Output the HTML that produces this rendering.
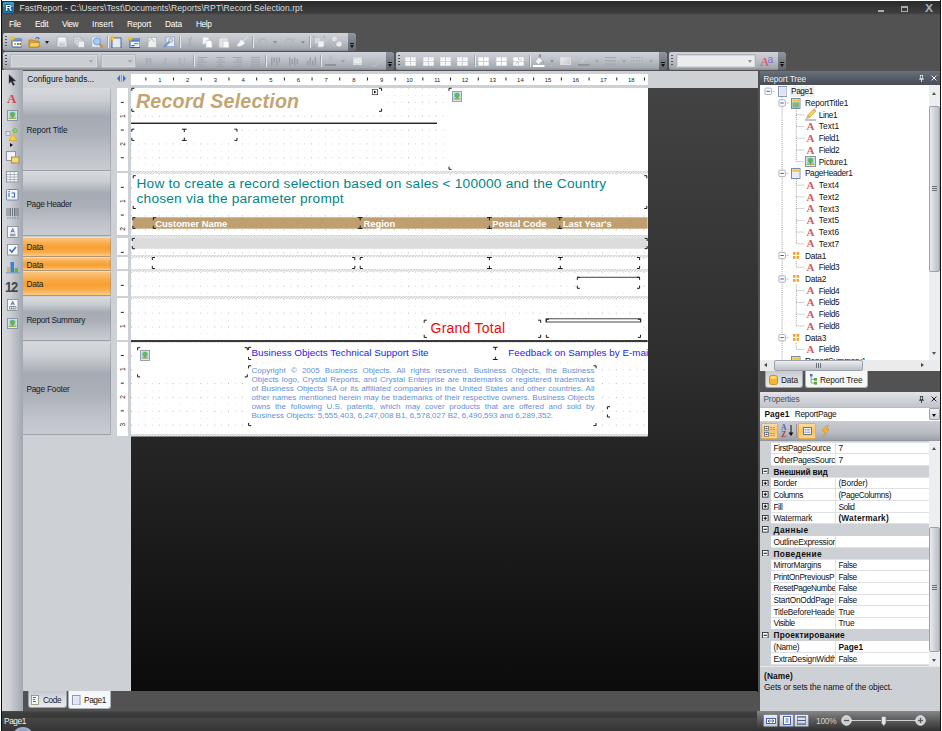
<!DOCTYPE html>
<html lang="en"><head><meta charset="utf-8"><title>FastReport - Record Selection.rpt</title>
<style>
*{box-sizing:border-box;margin:0;padding:0}
html,body{width:942px;height:731px;overflow:hidden;background:#525252}
body{position:relative;font-family:"Liberation Sans","DejaVu Sans",sans-serif;font-size:8.4px;color:#111;line-height:1}
.a{position:absolute}
.t{position:absolute;white-space:nowrap;line-height:10px;height:10px}
.tb{position:absolute;border-radius:2px 4px 4px 2px;background:linear-gradient(#cfd2d7 0%,#bfc3c9 40%,#a3a8b0 88%,#858a92 100%);}
.grip{position:absolute;left:2px;top:3px;width:2px;height:12px;background:repeating-linear-gradient(#50555c 0 1.4px,transparent 1.4px 2.9px)}
.ovf{position:absolute;right:0;top:0;width:8px;height:100%;border-radius:0 4px 4px 0;background:linear-gradient(#9096a0,#5f656e)}
.ovf:after{content:"";position:absolute;left:2px;bottom:3px;border:2px solid transparent;border-top:3px solid #111;border-bottom:0}
.ovf:before{content:"";position:absolute;left:2px;bottom:7px;width:4px;height:1px;background:#111}
.sep{position:absolute;top:3px;width:1px;height:12px;background:#9ea3ab;box-shadow:1px 0 0 #e6e8eb}
.cb{position:absolute;top:2px;height:14px;background:#cbced3;border:1px solid #b3b7bd;border-radius:1px;box-shadow:inset 0 0 0 1px #d6d8dc}
.dd{position:absolute;border:2.5px solid transparent;border-top:3px solid #8a8f97;border-bottom:0}
</style></head>
<body>
<div class="a" style="left:0;top:0;width:942px;height:15px;background:linear-gradient(#262626 0,#2c2c2c 12%,#3d3d3d 85%,#525252 100%)"></div>
<div class="a" style="left:0;top:15px;width:942px;height:18px;background:#525252"></div>
<svg class="a" style="left:3.2px;top:2.2px" width="11" height="11" viewBox="0 0 11 11"><rect width="11" height="11" rx="1.5" fill="#1b78b4"/><rect x="0" y="0" width="11" height="5" rx="1.5" fill="#3a9ad2"/><text x="2.3" y="9.3" font-family="Liberation Sans,sans-serif" font-weight="bold" font-size="9.5" fill="#fff" stroke="#0c1a24" stroke-width="1.1" paint-order="stroke">R</text></svg>
<div class="t" style="left:19.5px;top:3px;font-size:8.6px;color:#dcdcdc;letter-spacing:0.043px;">FastReport - C:\Users\Test\Documents\Reports\RPT\Record Selection.rpt</div>
<div class="a" style="left:878px;top:10px;width:6px;height:2px;background:#a6adba"></div>
<div class="a" style="left:901px;top:6px;width:7px;height:6px;border:1px solid #a6adba;border-top-width:2px"></div>
<div class="t" style="left:924.6px;top:3.5px;color:#a9b0bc;font-size:10px;font-weight:bold;transform:scaleX(1.2);transform-origin:0 0">X</div>
<div class="t" style="left:9px;top:19px;font-size:8.3px;color:#fff;letter-spacing:-0.411px;">File</div>
<div class="t" style="left:35px;top:19px;font-size:8.3px;color:#fff;letter-spacing:-0.277px;">Edit</div>
<div class="t" style="left:62px;top:19px;font-size:8.3px;color:#fff;letter-spacing:-0.428px;">View</div>
<div class="t" style="left:92px;top:19px;font-size:8.3px;color:#fff;letter-spacing:0.083px;">Insert</div>
<div class="t" style="left:127px;top:19px;font-size:8.3px;color:#fff;letter-spacing:-0.12px;">Report</div>
<div class="t" style="left:165px;top:19px;font-size:8.3px;color:#fff;letter-spacing:-0.168px;">Data</div>
<div class="t" style="left:196px;top:19px;font-size:8.3px;color:#fff;letter-spacing:-0.419px;">Help</div>
<div class="tb" style="left:3px;top:33px;width:353px;height:18px"><div class="grip"></div><div class="ovf"></div></div>
<svg class="a" style="left:10px;top:36px" width="12" height="12" viewBox="0 0 12 12"><rect x="2" y="3" width="10" height="8" rx="1" fill="#fff" stroke="#3b5f9e" stroke-width="1"/><rect x="2.5" y="3.5" width="9" height="2" fill="#5b86c8"/><rect x="4" y="7" width="2" height="2" fill="#e9a33a"/><rect x="7" y="7" width="2" height="2" fill="#5aa24a"/><rect x="9.5" y="7" width="1.5" height="2" fill="#c44"/><path d="M2.5 0 L3.3 1.7 5 2.5 3.3 3.3 2.5 5 1.7 3.3 0 2.5 1.7 1.7z" fill="#f5d23c" stroke="#d9a514" stroke-width=".4"/></svg>
<svg class="a" style="left:28px;top:36px" width="12" height="12" viewBox="0 0 12 12"><path d="M1 4 h4 l1 1 h5 v6 h-10z" fill="#e9a52c" stroke="#b57a12" stroke-width=".8"/><path d="M1 11 l1.5-4.5 h9.5 l-1.5 4.5z" fill="#f8cf62" stroke="#b57a12" stroke-width=".6"/><path d="M7 3 q2-3 4-.5" fill="none" stroke="#3d6fb8" stroke-width="1"/><path d="M10 1 l2 1.8 -2.4.6z" fill="#3d6fb8"/></svg>
<svg class="a" style="left:56px;top:36px" width="12" height="12" viewBox="0 0 12 12"><rect x="1" y="1" width="10" height="10" rx="1" fill="#e3e5e8" stroke="#a5aab1" stroke-width=".8"/><rect x="3" y="1.5" width="6" height="3.5" fill="#f4f5f6"/><rect x="3" y="7" width="6" height="4" fill="#c9ccd1"/></svg>
<svg class="a" style="left:73px;top:36px" width="12" height="12" viewBox="0 0 12 12"><rect x="1" y="1" width="7" height="7" fill="#e3e5e8" stroke="#a5aab1" stroke-width=".7"/><rect x="3" y="3" width="7" height="7" fill="#e3e5e8" stroke="#a5aab1" stroke-width=".7"/><rect x="5" y="5" width="6.5" height="6.5" fill="#eceef0" stroke="#a5aab1" stroke-width=".7"/></svg>
<svg class="a" style="left:91px;top:36px" width="12" height="12" viewBox="0 0 12 12"><rect x="1" y="1" width="8" height="10" fill="#f4f6f9" stroke="#aab3c2" stroke-width=".7"/><circle cx="6" cy="5.5" r="3.6" fill="#a9cbee" stroke="#6f9fd6" stroke-width="1"/><path d="M8.7 8.3 L11.6 11.2" stroke="#c98a3a" stroke-width="1.8" stroke-linecap="round"/></svg>
<svg class="a" style="left:110px;top:36px" width="12" height="12" viewBox="0 0 12 12"><rect x="2" y="2" width="9" height="10" fill="#f5f7fb" stroke="#41639f" stroke-width="1"/><rect x="3" y="3" width="7" height="8" fill="#e4e9f3"/><path d="M2.5 0 L3.3 1.7 5 2.5 3.3 3.3 2.5 5 1.7 3.3 0 2.5 1.7 1.7z" fill="#f5d23c" stroke="#d9a514" stroke-width=".4"/></svg>
<svg class="a" style="left:128px;top:36px" width="12" height="12" viewBox="0 0 12 12"><rect x="2" y="3" width="10" height="8.5" fill="#f0f3f8" stroke="#3b5f9e" stroke-width="1"/><rect x="2.5" y="3.5" width="9" height="2.2" fill="#4f82cf"/><rect x="6" y="7" width="4.5" height="1.3" fill="#8d97a8"/><rect x="3.5" y="9" width="3" height="1.3" fill="#3b5f9e"/><path d="M2.5 0 L3.3 1.7 5 2.5 3.3 3.3 2.5 5 1.7 3.3 0 2.5 1.7 1.7z" fill="#f5d23c" stroke="#d9a514" stroke-width=".4"/></svg>
<svg class="a" style="left:146px;top:36px" width="12" height="12" viewBox="0 0 12 12"><rect x="2" y="1.5" width="8.5" height="10" fill="#eceef0" stroke="#a5aab1" stroke-width=".7"/><path d="M2 6 L6 2 M5 2 L8.5 6" stroke="#b9bdc3" stroke-width="1"/></svg>
<svg class="a" style="left:163px;top:36px" width="12" height="12" viewBox="0 0 12 12"><rect x="3" y="1" width="8.5" height="9.5" fill="#e9edf5" stroke="#8d9fc4" stroke-width=".8"/><path d="M1.5 10.5 L6.5 5.5" stroke="#6e97d8" stroke-width="2.2" stroke-linecap="round"/><circle cx="7.7" cy="4.2" r="2" fill="#d6d9de" stroke="#9a9fa7" stroke-width=".8"/></svg>
<svg class="a" style="left:184px;top:36px" width="12" height="12" viewBox="0 0 12 12"><path d="M7.5 1 L5 8 M4.5 2 L7 8" stroke="#a9adb4" stroke-width="1"/><circle cx="4.2" cy="9.6" r="1.5" fill="none" stroke="#a9adb4" stroke-width="1"/><circle cx="7.6" cy="9.6" r="1.5" fill="none" stroke="#a9adb4" stroke-width="1"/></svg>
<svg class="a" style="left:201px;top:36px" width="12" height="12" viewBox="0 0 12 12"><path d="M1.5 1 h5 l1.5 1.5 v5.5 h-6.5z" fill="#f6f7f8" stroke="#c3c6cb" stroke-width=".7"/><path d="M5 4.5 h4.5 l1.5 1.5 v5.5 h-6z" fill="#fbfbfc" stroke="#c3c6cb" stroke-width=".7"/></svg>
<svg class="a" style="left:218px;top:36px" width="12" height="12" viewBox="0 0 12 12"><rect x="1" y="2" width="9" height="9.5" rx="1" fill="#e3e5e8" stroke="#bfc3c8" stroke-width=".7"/><rect x="3.5" y="1" width="4" height="2" fill="#cfd2d6"/><path d="M5 5 h4.5 l1.5 1.5 v5 h-6z" fill="#fbfbfc" stroke="#c3c6cb" stroke-width=".7"/></svg>
<svg class="a" style="left:236px;top:36px" width="12" height="12" viewBox="0 0 12 12"><path d="M11.3 .8 L7.5 5" stroke="#d4d7db" stroke-width="1.8" stroke-linecap="round"/><path d="M5.5 3.5 L9 7 7.5 8.5 5 10 2 10.5 .8 9 3 7 4 5z" fill="#f4f5f7" stroke="#cdd0d5" stroke-width=".5"/></svg>
<svg class="a" style="left:256px;top:36px" width="12" height="12" viewBox="0 0 12 12"><path d="M3 5 q3.5-4 6.5-.8 q1.8 3 -2 6" fill="none" stroke="#b3b7bd" stroke-width="1.4"/><path d="M1.5 2.5 L2.2 6.8 6 5.5z" fill="#b3b7bd"/></svg>
<svg class="a" style="left:284px;top:36px" width="12" height="12" viewBox="0 0 12 12"><path d="M9 5 q-3.5-4 -6.5-.8 q-1.8 3 2 6" fill="none" stroke="#b3b7bd" stroke-width="1.4"/><path d="M10.5 2.5 L9.8 6.8 6 5.5z" fill="#b3b7bd"/></svg>
<svg class="a" style="left:313px;top:36px" width="12" height="12" viewBox="0 0 12 12"><rect x="1.5" y="1.5" width="6" height="6" fill="#d6d9dd" stroke="#b9bdc3" stroke-width=".6"/><rect x="5" y="5" width="6" height="6" fill="#eef0f2" stroke="#c3c6cb" stroke-width=".6"/><rect x="0" y="0" width="1.5" height="1.5" fill="#9da2aa"/><rect x="10.5" y="0" width="1.5" height="1.5" fill="#9da2aa"/><rect x="0" y="10.5" width="1.5" height="1.5" fill="#9da2aa"/><rect x="10.5" y="10.5" width="1.5" height="1.5" fill="#9da2aa"/></svg>
<svg class="a" style="left:331px;top:36px" width="12" height="12" viewBox="0 0 12 12"><circle cx="3.5" cy="3" r="2.3" fill="#e6e8eb"/><circle cx="8" cy="8" r="2.6" fill="#eef0f2"/><path d="M3.5 3 L8 8 M1 8 L4 11 M8 1 L11 4" stroke="#c2c5ca" stroke-width=".8"/></svg>
<div class="dd" style="left:45px;top:41px;border-top-color:#222"></div>
<div class="dd" style="left:273px;top:41px;border-top-color:#8a8f97"></div>
<div class="dd" style="left:300.5px;top:41px;border-top-color:#8a8f97"></div>
<div class="sep" style="left:107px;top:36px"></div>
<div class="sep" style="left:179px;top:36px"></div>
<div class="sep" style="left:252px;top:36px"></div>
<div class="sep" style="left:309px;top:36px"></div>
<div class="tb" style="left:3px;top:52px;width:391px;height:18px"><div class="grip"></div><div class="ovf"></div></div>
<div class="tb" style="left:396px;top:52px;width:271px;height:18px"><div class="grip"></div><div class="ovf"></div></div>
<div class="tb" style="left:669px;top:52px;width:117px;height:18px"><div class="grip"></div><div class="ovf"></div></div>
<div class="cb" style="left:9.5px;top:54px;width:88px"></div><div class="dd" style="left:88.5px;top:60px;border-top-color:#a0a5ac"></div>
<div class="cb" style="left:100.5px;top:54px;width:35px"></div><div class="dd" style="left:127.5px;top:60px;border-top-color:#a0a5ac"></div>
<div class="cb" style="left:675.5px;top:54px;width:80.5px;background:#ececee;border-color:#aeb2b9"></div><div class="dd" style="left:747.5px;top:60px;border-top-color:#8f949b"></div>
<div class="t" style="left:145px;top:55px;font-family:'Liberation Serif',serif;font-weight:bold;font-size:11px;line-height:12px;height:12px;color:#a6aab1">B</div>
<div class="t" style="left:163px;top:55px;font-family:'Liberation Serif',serif;font-style:italic;font-size:11px;line-height:12px;height:12px;color:#a6aab1">I</div>
<div class="t" style="left:178px;top:55px;font-family:'Liberation Serif',serif;font-size:11px;line-height:12px;height:12px;color:#a6aab1;text-decoration:underline">U</div>
<svg class="a" style="left:197px;top:55.5px" width="11" height="12" viewBox="0 0 11 12"><rect x="1" y="1.2" width="9" height=".8" fill="#9a9fa7"/><rect x="1" y="3.4" width="6" height=".8" fill="#9a9fa7"/><rect x="1" y="5.6" width="9" height=".8" fill="#9a9fa7"/><rect x="1" y="7.8" width="6" height=".8" fill="#9a9fa7"/><rect x="1" y="10" width="9" height=".8" fill="#9a9fa7"/></svg>
<svg class="a" style="left:214.5px;top:55.5px" width="11" height="12" viewBox="0 0 11 12"><rect x="1" y="1.2" width="9" height=".8" fill="#9a9fa7"/><rect x="3" y="3.4" width="5" height=".8" fill="#9a9fa7"/><rect x="1" y="5.6" width="9" height=".8" fill="#9a9fa7"/><rect x="3" y="7.8" width="5" height=".8" fill="#9a9fa7"/><rect x="1" y="10" width="9" height=".8" fill="#9a9fa7"/></svg>
<svg class="a" style="left:232px;top:55.5px" width="11" height="12" viewBox="0 0 11 12"><rect x="1" y="1.2" width="9" height=".8" fill="#9a9fa7"/><rect x="4" y="3.4" width="6" height=".8" fill="#9a9fa7"/><rect x="1" y="5.6" width="9" height=".8" fill="#9a9fa7"/><rect x="4" y="7.8" width="6" height=".8" fill="#9a9fa7"/><rect x="1" y="10" width="9" height=".8" fill="#9a9fa7"/></svg>
<svg class="a" style="left:250px;top:55.5px" width="11" height="12" viewBox="0 0 11 12"><rect x="1" y="1.2" width="9" height=".8" fill="#9a9fa7"/><rect x="1" y="3.4" width="9" height=".8" fill="#9a9fa7"/><rect x="1" y="5.6" width="9" height=".8" fill="#9a9fa7"/><rect x="1" y="7.8" width="9" height=".8" fill="#9a9fa7"/><rect x="1" y="10" width="9" height=".8" fill="#9a9fa7"/></svg>
<svg class="a" style="left:270px;top:55.5px" width="11" height="12" viewBox="0 0 11 12"><rect x="1.2" y="1.5" width="1.2" height="8" fill="#9298a0"/><rect x="3.7" y="1.5" width="1.2" height="5" fill="#9298a0"/><rect x="6.2" y="1.5" width="1.2" height="8" fill="#9298a0"/><rect x="8.7" y="1.5" width="1.2" height="5" fill="#9298a0"/></svg>
<svg class="a" style="left:288px;top:55.5px" width="11" height="12" viewBox="0 0 11 12"><rect x="1.2" y="1.5" width="1.2" height="8" fill="#9298a0"/><rect x="3.7" y="3" width="1.2" height="5" fill="#9298a0"/><rect x="6.2" y="1.5" width="1.2" height="8" fill="#9298a0"/><rect x="8.7" y="3" width="1.2" height="5" fill="#9298a0"/></svg>
<svg class="a" style="left:305.5px;top:55.5px" width="11" height="12" viewBox="0 0 11 12"><rect x="1.2" y="4.5" width="1.2" height="5" fill="#9298a0"/><rect x="3.7" y="1.5" width="1.2" height="8" fill="#9298a0"/><rect x="6.2" y="4.5" width="1.2" height="5" fill="#9298a0"/><rect x="8.7" y="1.5" width="1.2" height="8" fill="#9298a0"/></svg>
<div class="sep" style="left:193px;top:55px"></div>
<div class="sep" style="left:265px;top:55px"></div>
<div class="sep" style="left:320px;top:55px"></div>
<div class="sep" style="left:474px;top:55px"></div>
<div class="sep" style="left:529px;top:55px"></div>
<div class="t" style="left:327px;top:54px;font-family:'Liberation Serif',serif;font-style:italic;font-size:10px;line-height:10px;color:#b6bac0">A</div>
<div class="a" style="left:325px;top:64px;width:11px;height:2px;background:#8e939a"></div>
<div class="dd" style="left:341px;top:60px;border-top-color:#9ea3aa"></div>
<div class="a" style="left:353px;top:57px;width:9px;height:8px;background:#d7dade"></div><div class="t" style="left:354px;top:56px;font-size:6.5px;font-weight:bold;color:#f4f5f6">ab</div>
<svg class="a" style="left:369px;top:55.5px" width="11" height="12" viewBox="0 0 11 12"><path d="M2.6 4 A3.6 3.6 0 1 1 3.2 9" fill="none" stroke="#bcc0c6" stroke-width="1.3"/><path d="M.8 2.2 L4.6 2.6 2.4 5.6z" fill="#bcc0c6"/></svg>
<svg class="a" style="left:405px;top:57.2px" width="11" height="9" viewBox="0 0 11 9"><rect x="0.3" y="0.3" width="10.4" height="8.4" fill="#fcfcfd"/><path d="M5.5 0 V9 M0 4.5 H11" stroke="#c6cad0" stroke-width=".9"/><path d="M2.8 0 V9 M8.2 0 V9 M0 2.3 H11 M0 6.7 H11" stroke="#dadde1" stroke-width=".6" stroke-dasharray="1 1"/></svg>
<svg class="a" style="left:422.5px;top:57.2px" width="11" height="9" viewBox="0 0 11 9"><rect x="0.3" y="0.3" width="10.4" height="8.4" fill="#fcfcfd"/><path d="M5.5 0 V9 M0 4.5 H11" stroke="#c6cad0" stroke-width=".9"/><path d="M2.8 0 V9 M8.2 0 V9 M0 2.3 H11 M0 6.7 H11" stroke="#dadde1" stroke-width=".6" stroke-dasharray="1 1"/></svg>
<svg class="a" style="left:440px;top:57.2px" width="11" height="9" viewBox="0 0 11 9"><rect x="0.3" y="0.3" width="10.4" height="8.4" fill="#fcfcfd"/><path d="M5.5 0 V9 M0 4.5 H11" stroke="#c6cad0" stroke-width=".9"/><path d="M2.8 0 V9 M8.2 0 V9 M0 2.3 H11 M0 6.7 H11" stroke="#dadde1" stroke-width=".6" stroke-dasharray="1 1"/></svg>
<svg class="a" style="left:457px;top:57.2px" width="11" height="9" viewBox="0 0 11 9"><rect x="0.3" y="0.3" width="10.4" height="8.4" fill="#fcfcfd"/><path d="M5.5 0 V9 M0 4.5 H11" stroke="#c6cad0" stroke-width=".9"/><path d="M2.8 0 V9 M8.2 0 V9 M0 2.3 H11 M0 6.7 H11" stroke="#dadde1" stroke-width=".6" stroke-dasharray="1 1"/></svg>
<svg class="a" style="left:478px;top:57.2px" width="11" height="9" viewBox="0 0 11 9"><rect x="0.3" y="0.3" width="10.4" height="8.4" fill="#fcfcfd"/><path d="M5.5 0 V9 M0 4.5 H11" stroke="#c6cad0" stroke-width=".9"/></svg>
<svg class="a" style="left:495.5px;top:57.2px" width="11" height="9" viewBox="0 0 11 9"><rect x="0.3" y="0.3" width="10.4" height="8.4" fill="#fcfcfd"/><path d="M5.5 0 V9 M0 4.5 H11" stroke="#c6cad0" stroke-width=".9"/></svg>
<svg class="a" style="left:512.5px;top:57.2px" width="11" height="9" viewBox="0 0 11 9"><rect x="0.3" y="0.3" width="10.4" height="8.4" fill="#fcfcfd"/><path d="M5.5 0 V9 M0 4.5 H11" stroke="#c6cad0" stroke-width=".9"/><path d="M2 7.5 L9 1.5" stroke="#c0c4ca" stroke-width="1"/><circle cx="6.5" cy="3.5" r="1.8" fill="#dfe2e6"/></svg>
<svg class="a" style="left:533px;top:54px" width="12" height="13" viewBox="0 0 12 13"><path d="M2 7.5 L6 3 10 6.5 5.5 10.5z" fill="#f1f2f4" stroke="#9a9fa7" stroke-width=".6"/><path d="M6 3 q0-2.5 1.5-2.5 v3" fill="none" stroke="#70757d" stroke-width=".8"/><path d="M10 6.5 q1.2 1.5 .6 3 q-1-.5 -.6-3" fill="#8d9299"/><rect x="0" y="11" width="11.5" height="2" fill="#fff"/></svg>
<div class="dd" style="left:549.5px;top:60px;border-top-color:#8f949b"></div>
<div class="a" style="left:560px;top:57px;width:11px;height:8px;background:linear-gradient(135deg,#eceef0,#c5c8cd);border:1px solid #d9dbdf"></div>
<svg class="a" style="left:578px;top:55px" width="12" height="12" viewBox="0 0 12 12"><path d="M3 7.5 L8.5 1.5" stroke="#c9ccd1" stroke-width="1.6"/><rect x="0" y="9" width="11.5" height="1.8" fill="#8e939a"/></svg>
<div class="dd" style="left:594.5px;top:60px;border-top-color:#9ea3aa"></div>
<svg class="a" style="left:605px;top:56px" width="12" height="10" viewBox="0 0 12 10"><rect x="0" y="1" width="11" height="1" fill="#a5aab1"/><rect x="0" y="4" width="11" height="1.3" fill="#a5aab1"/><rect x="0" y="7.5" width="11" height="1.8" fill="#a5aab1"/></svg>
<div class="dd" style="left:621.5px;top:60px;border-top-color:#9ea3aa"></div>
<svg class="a" style="left:631px;top:56px" width="12" height="10" viewBox="0 0 12 10"><path d="M0 1.5 H12 M0 4.7 H12 M0 8 H12" stroke="#a5aab1" stroke-width="1" stroke-dasharray="1.5 1"/></svg>
<div class="dd" style="left:648.5px;top:60px;border-top-color:#9ea3aa"></div>
<div class="t" style="left:760.3px;top:55.5px;font-family:'Liberation Serif',serif;font-weight:bold;font-size:12.3px;line-height:12px;height:12px;color:#df6468">A</div>
<div class="t" style="left:767.5px;top:55.5px;font-size:10.2px;line-height:8px;height:8px;color:#7272dc">a</div>
<div class="a" style="left:2px;top:70px;width:21px;height:641px;background:linear-gradient(90deg,#d6d8dc 0%,#cdd0d5 35%,#b3b8bf 75%,#a2a7b0 100%)"></div>
<svg class="a" style="left:8px;top:74px" width="9" height="12" viewBox="0 0 9 12"><path d="M1 0.5 L1 9.5 3.2 7.5 5 11.5 6.6 10.8 4.8 7 7.8 7z" fill="#222" stroke="#555" stroke-width=".4"/></svg>
<div class="t" style="left:7px;top:92px;font-family:'Liberation Serif',serif;font-weight:bold;font-size:13px;line-height:13px;height:13px;color:#d9434c">A</div>
<svg class="a" style="left:6.5px;top:110px" width="11" height="11" viewBox="0 0 11 11"><rect x=".5" y=".5" width="10" height="10" fill="#e4e8ed" stroke="#8e949e" stroke-width="1"/><rect x="1.6" y="1.6" width="7.8" height="6.4" fill="#a9d6f2"/><circle cx="5.5" cy="4.3" r="2.6" fill="#64b85c"/><rect x="4.9" y="6.3" width="1.2" height="1.7" fill="#8a6a3a"/><rect x="1.6" y="7.6" width="7.8" height="1.4" fill="#7cc06a"/><rect x="4" y="7.9" width="3" height="1" fill="#e6923a"/></svg>
<svg class="a" style="left:5px;top:128px" width="14" height="14" viewBox="0 0 14 14"><rect x="1" y="3.5" width="4" height="4" fill="#e4e6e9" stroke="#8b9099" stroke-width=".7"/><circle cx="10" cy="2.8" r="2.2" fill="#8fd06a" stroke="#58a838" stroke-width=".6"/><path d="M8 6 L12 12.5 4 12.5z" fill="#f7d04a" stroke="#d7a420" stroke-width=".7"/></svg>
<div class="a" style="left:10px;top:143px;border:2px solid transparent;border-left:3px solid #111;border-right:0"></div>
<svg class="a" style="left:5.5px;top:151px" width="14" height="13" viewBox="0 0 14 13"><rect x=".5" y=".5" width="9" height="9" fill="#f1f3f6" stroke="#8b9099" stroke-width=".9"/><rect x="5.5" y="6" width="7.5" height="6" fill="#f5d873" stroke="#9a8a50" stroke-width=".9"/></svg>
<svg class="a" style="left:6px;top:171px" width="13" height="12" viewBox="0 0 13 12"><rect x=".5" y=".5" width="11.5" height="10.5" fill="#f5f6f8" stroke="#8b9099" stroke-width=".9"/><path d="M.5 3.5 H12 M.5 6 H12 M.5 8.5 H12 M4.3 .5 V11 M8.2 .5 V11" stroke="#9aa0a9" stroke-width=".7"/></svg>
<svg class="a" style="left:6px;top:189px" width="13" height="12" viewBox="0 0 13 12"><rect x=".5" y=".5" width="11.5" height="10.5" rx="1" fill="#f5f7fb" stroke="#5c7bb5" stroke-width=".9"/><path d="M3 4 v4 M5.5 4 h3 v4 h-3" fill="none" stroke="#3f68b5" stroke-width="1.1"/><rect x="2.5" y="2" width="1.3" height="1.3" fill="#3f68b5"/></svg>
<svg class="a" style="left:5.5px;top:208.3px" width="14" height="12" viewBox="0 0 14 12"><path d="M1 0 V8 M3 0 V8 M4.5 0 V8 M6.5 0 V8 M8.5 0 V8 M10 0 V8 M12 0 V8" stroke="#6a6f77" stroke-width=".9"/><path d="M1 10 H12.5" stroke="#7a7f87" stroke-width="1" stroke-dasharray="1.5 1"/></svg>
<svg class="a" style="left:6.5px;top:225.7px" width="12" height="12" viewBox="0 0 12 12"><rect x=".5" y=".5" width="10.5" height="11" fill="#f6f7f9" stroke="#8b9099" stroke-width=".9"/><path d="M4 6.5 L5.7 2.5 7.4 6.5 M4.6 5.3 H6.8" fill="none" stroke="#3f68b5" stroke-width=".9"/><path d="M3 8.3 H8.5 M3 9.8 H8.5" stroke="#555" stroke-width=".7"/></svg>
<svg class="a" style="left:6.5px;top:243.6px" width="12" height="12" viewBox="0 0 12 12"><rect x=".5" y=".5" width="10.5" height="10.5" fill="#f6f7f9" stroke="#8b9099" stroke-width=".9"/><path d="M2.5 5.5 L4.8 8 9 3" fill="none" stroke="#3f68b5" stroke-width="1.5"/></svg>
<svg class="a" style="left:5.5px;top:260.6px" width="14" height="13" viewBox="0 0 14 13"><rect x="1" y="6" width="3" height="5.5" fill="#e8b53a"/><rect x="4.5" y="1" width="3.5" height="10.5" fill="#3f7fd6"/><rect x="8.5" y="7" width="3.5" height="4.5" fill="#6ab04c"/><rect x="0" y="11.3" width="13.5" height="1" fill="#6f98c8"/></svg>
<div class="t" style="left:5px;top:280.2px;font-size:14px;line-height:14px;height:14px;letter-spacing:-1.2px;color:#44484e;font-weight:bold;transform:scaleX(.92);transform-origin:0 0">12</div>
<svg class="a" style="left:6.5px;top:298.8px" width="12" height="12" viewBox="0 0 12 12"><rect x=".5" y=".5" width="10.5" height="11" fill="#f6f7f9" stroke="#8b9099" stroke-width=".9"/><path d="M4 6 L5.7 2.3 7.4 6 M4.6 4.8 H6.8" fill="none" stroke="#3f68b5" stroke-width=".9"/><path d="M2.5 7.5 H9 V10 H2.5z M4.7 7.5 V10 M6.8 7.5 V10" fill="none" stroke="#555" stroke-width=".6"/></svg>
<svg class="a" style="left:6.5px;top:317.5px" width="11" height="11" viewBox="0 0 11 11"><rect x=".5" y=".5" width="10" height="10" fill="#e4e8ed" stroke="#8e949e" stroke-width="1"/><rect x="1.6" y="1.6" width="7.8" height="6.4" fill="#a9d6f2"/><circle cx="5.5" cy="4.3" r="2.6" fill="#64b85c"/><rect x="4.9" y="6.3" width="1.2" height="1.7" fill="#8a6a3a"/><rect x="1.6" y="7.6" width="7.8" height="1.4" fill="#7cc06a"/><rect x="4" y="7.9" width="3" height="1" fill="#e6923a"/></svg>
<div class="a" style="left:23px;top:70.5px;width:734.8px;height:17.3px;background:#cdd0d5"></div>
<div class="a" style="left:23px;top:87px;width:108px;height:604px;background:#cdd0d5"></div>
<div class="t" style="left:27.3px;top:74px;font-size:8.3px;color:#111;letter-spacing:-0.062px;">Configure bands...</div>
<div class="a" style="left:23px;top:88px;width:88px;height:82.5px;background:linear-gradient(#d6d8dc 0%,#cbced3 14%,#a5aab3 34%,#abb0b8 55%,#bec2c8 80%,#c9ccd2 100%);border-top:1px solid rgba(255,255,255,.3);border-bottom:1px solid rgba(90,96,108,.45);border-right:1px solid rgba(120,126,138,.35)"><div class="t" style="left:3.4px;top:36.05px;font-size:8.3px;color:#1a1a1a;letter-spacing:-0.116px;">Report Title</div></div>
<div class="a" style="left:23px;top:171px;width:88px;height:65px;background:linear-gradient(#d6d8dc 0%,#cbced3 14%,#a5aab3 34%,#abb0b8 55%,#bec2c8 80%,#c9ccd2 100%);border-top:1px solid rgba(255,255,255,.3);border-bottom:1px solid rgba(90,96,108,.45);border-right:1px solid rgba(120,126,138,.35)"><div class="t" style="left:3.4px;top:27.3px;font-size:8.3px;color:#1a1a1a;letter-spacing:-0.315px;">Page Header</div></div>
<div class="a" style="left:23px;top:236.5px;width:88px;height:20px;background:linear-gradient(#fbc680 0%,#f9ae4e 28%,#f89f32 55%,#f9ae4e 80%,#fccb8c 100%);border-top:1px solid rgba(255,255,255,.3);border-bottom:1px solid rgba(90,96,108,.45);border-right:1px solid rgba(120,126,138,.35)"><div class="t" style="left:3.4px;top:4.8px;font-size:8.3px;color:#1a1a1a;letter-spacing:-0.168px;">Data</div></div>
<div class="a" style="left:23px;top:257px;width:88px;height:13.5px;background:linear-gradient(#fbc680 0%,#f9ae4e 28%,#f89f32 55%,#f9ae4e 80%,#fccb8c 100%);border-top:1px solid rgba(255,255,255,.3);border-bottom:1px solid rgba(90,96,108,.45);border-right:1px solid rgba(120,126,138,.35)"><div class="t" style="left:3.4px;top:1.55px;font-size:8.3px;color:#1a1a1a;letter-spacing:-0.168px;">Data</div></div>
<div class="a" style="left:23px;top:271px;width:88px;height:25px;background:linear-gradient(#fbc680 0%,#f9ae4e 28%,#f89f32 55%,#f9ae4e 80%,#fccb8c 100%);border-top:1px solid rgba(255,255,255,.3);border-bottom:1px solid rgba(90,96,108,.45);border-right:1px solid rgba(120,126,138,.35)"><div class="t" style="left:3.4px;top:7.3px;font-size:8.3px;color:#1a1a1a;letter-spacing:-0.168px;">Data</div></div>
<div class="a" style="left:23px;top:296.5px;width:88px;height:44.5px;background:linear-gradient(#d6d8dc 0%,#cbced3 14%,#a5aab3 34%,#abb0b8 55%,#bec2c8 80%,#c9ccd2 100%);border-top:1px solid rgba(255,255,255,.3);border-bottom:1px solid rgba(90,96,108,.45);border-right:1px solid rgba(120,126,138,.35)"><div class="t" style="left:3.4px;top:17.05px;font-size:8.3px;color:#1a1a1a;letter-spacing:-0.292px;">Report Summary</div></div>
<div class="a" style="left:23px;top:341.5px;width:88px;height:93px;background:linear-gradient(#d6d8dc 0%,#cbced3 14%,#a5aab3 34%,#abb0b8 55%,#bec2c8 80%,#c9ccd2 100%);border-top:1px solid rgba(255,255,255,.3);border-bottom:1px solid rgba(90,96,108,.45);border-right:1px solid rgba(120,126,138,.35)"><div class="t" style="left:3.4px;top:41.3px;font-size:8.3px;color:#1a1a1a;letter-spacing:-0.221px;">Page Footer</div></div>
<svg class="a" style="left:116.5px;top:75px" width="9" height="7" viewBox="0 0 9 7"><path d="M3 0 L0 3.5 3 7z" fill="#3f6fd0"/><path d="M6 0 L9 3.5 6 7z" fill="#3f6fd0"/><rect x="4" y="0" width="1" height="7" fill="#b79a6a"/></svg>
<div class="a" style="left:131px;top:87.5px;width:626.8px;height:604px;background:linear-gradient(#434343 0%,#2e2e2e 45%,#0b0b0b 100%)"></div>
<div class="a" style="left:131px;top:87.5px;width:516.6px;height:348.5px;background:#d9dbde"></div>
<div class="a" style="left:131px;top:87.5px;width:516.6px;height:83.3px;background:#fff"></div>
<div class="a" style="left:131px;top:173.3px;width:516.6px;height:62px;background:#fff"></div>
<div class="a" style="left:131px;top:238px;width:516.6px;height:16.8px;background:#fff"></div>
<div class="a" style="left:131px;top:257.3px;width:516.6px;height:11.5px;background:#fff"></div>
<div class="a" style="left:131px;top:271.3px;width:516.6px;height:24.5px;background:#fff"></div>
<div class="a" style="left:131px;top:298.3px;width:516.6px;height:41.7px;background:#fff"></div>
<div class="a" style="left:131px;top:342.3px;width:516.6px;height:92px;background:#fff"></div>
<svg class="a" style="left:131px;top:87.5px" width="516.6" height="350" viewBox="0 0 516.6 350"><defs><pattern id="dots" x="0.05" y="0.05" width="13.85" height="13.85" patternUnits="userSpaceOnUse"><rect x="0" y="0" width=".9" height=".9" fill="#a4a4a4"/><rect x="6.925" y="0" width=".9" height=".9" fill="#cfcfcf"/><rect x="0" y="6.925" width=".9" height=".9" fill="#e0e0e0"/><rect x="6.925" y="6.925" width=".9" height=".9" fill="#e6e6e6"/></pattern><pattern id="hatch" width="3" height="3" patternUnits="userSpaceOnUse"><rect width="3" height="3" fill="#eceded"/><path d="M0 3 L3 0" stroke="#c6c8cb" stroke-width=".9"/></pattern></defs><svg x="0" y="0" width="516.6" height="83.3"><rect x="0" y="0.4" width="516.6" height="83.3" fill="url(#dots)"/></svg><svg x="0" y="85.8" width="516.6" height="62"><rect x="0" y="0.4" width="516.6" height="62" fill="url(#dots)"/></svg><svg x="0" y="150.5" width="516.6" height="16.8"><rect x="0" y="0.4" width="516.6" height="16.8" fill="url(#dots)"/></svg><svg x="0" y="169.8" width="516.6" height="11.5"><rect x="0" y="0.4" width="516.6" height="11.5" fill="url(#dots)"/></svg><svg x="0" y="183.8" width="516.6" height="24.5"><rect x="0" y="0.4" width="516.6" height="24.5" fill="url(#dots)"/></svg><svg x="0" y="210.8" width="516.6" height="41.7"><rect x="0" y="0.4" width="516.6" height="41.7" fill="url(#dots)"/></svg><svg x="0" y="253.5" width="516.6" height="93.3"><rect x="0" y="0.4" width="516.6" height="93.3" fill="url(#dots)"/></svg><rect x="0" y="83.3" width="516.6" height="2.5" fill="url(#hatch)"/><rect x="0" y="147.8" width="516.6" height="2.7" fill="url(#hatch)"/><rect x="0" y="167.3" width="516.6" height="2.5" fill="url(#hatch)"/><rect x="0" y="181.3" width="516.6" height="2.5" fill="url(#hatch)"/><rect x="0" y="208.3" width="516.6" height="2.5" fill="url(#hatch)"/><rect x="0" y="252.5" width="516.6" height="2.3" fill="url(#hatch)"/><rect x="0" y="346.8" width="516.6" height="1.7" fill="url(#hatch)"/></svg>
<svg class="a" style="left:0px;top:0px;overflow:hidden" width="648" height="440" viewBox="0 0 648 440"><rect x="131.5" y="88" width="250.5" height="23.5" fill="#fff"/><rect x="131" y="122.6" width="306" height="1.3" fill="#111"/><rect x="131.5" y="129" width="105.5" height="11.5" fill="#fff"/><rect x="449" y="88" width="198.5" height="81.5" fill="#fff"/><rect x="372.3" y="89.3" width="5.4" height="5.4" fill="#fff" stroke="#333" stroke-width=".7"/><path d="M374 90.5 L376.5 92 374 93.5z" fill="#111"/><rect x="133" y="175.5" width="514" height="33" fill="#fff"/><rect x="132.5" y="217.3" width="515.1" height="11.4" fill="#bf9f70"/><rect x="132" y="238.2" width="515.6" height="10.6" fill="#dcdcdc"/><rect x="152" y="257.3" width="488" height="11.5" fill="#fff"/><rect x="577" y="277" width="63" height="11.5" fill="#fff"/><rect x="577" y="276.8" width="62.8" height="1" fill="#444"/><rect x="424" y="320" width="117" height="17.6" fill="#fff"/><rect x="546" y="319" width="95" height="18.6" fill="#fff"/><rect x="546" y="318.8" width="94.8" height="3.2" fill="#fff" stroke="#333" stroke-width=".9"/><rect x="131" y="340.2" width="516.6" height="1.6" fill="#111"/><rect x="137.5" y="347.5" width="110" height="29.5" fill="#fff"/><rect x="248.5" y="347" width="351.5" height="12.8" fill="#fff"/><rect x="501" y="347" width="146.6" height="12.8" fill="#fff"/><rect x="248.5" y="365.5" width="347.8" height="60.5" fill="#fff"/><path d="M131.8 90.9 V88.3 H134.4 M131.8 108.7 V111.3 H134.4 M381.6 90.9 V88.3 H379 M381.6 108.7 V111.3 H379 M131.8 131.8 V129.2 H134.4 M131.8 137.8 V140.4 H134.4 M237 131.8 V129.2 H234.4 M237 137.8 V140.4 H234.4 M181.9 129.2 H186.7 M184.3 129.2 V132 M181.9 140.4 H186.7 M184.3 140.4 V137.6 M449 90.9 V88.3 H451.6 M449 166.7 V169.3 H451.6 M133.2 178.3 V175.7 H135.8 M133.2 205.9 V208.5 H135.8 M646.8 178.3 V175.7 H644.2 M646.8 205.9 V208.5 H644.2 M132.3 241 V238.4 H134.9 M132.3 246.1 V248.7 H134.9 M647.2 241 V238.4 H644.6 M647.2 246.1 V248.7 H644.6 M152.3 260.1 V257.5 H154.9 M152.3 265.9 V268.5 H154.9 M354.8 260.1 V257.5 H352.2 M354.8 265.9 V268.5 H352.2 M360.2 260.1 V257.5 H362.8 M360.2 265.9 V268.5 H362.8 M639.6 260.1 V257.5 H637 M639.6 265.9 V268.5 H637 M487 257.5 H491.8 M489.4 257.5 V260.3 M487 268.5 H491.8 M489.4 268.5 V265.7 M557.9 257.5 H562.7 M560.3 257.5 V260.3 M557.9 268.5 H562.7 M560.3 268.5 V265.7 M577.3 279.9 V277.3 H579.9 M577.3 285.7 V288.3 H579.9 M639.6 279.9 V277.3 H637 M639.6 285.7 V288.3 H637 M424.2 322.8 V320.2 H426.8 M424.2 334.8 V337.4 H426.8 M540.7 322.8 V320.2 H538.1 M540.7 334.8 V337.4 H538.1 M546.3 321.9 V319.3 H548.9 M546.3 334.8 V337.4 H548.9 M640.5 321.9 V319.3 H637.9 M640.5 334.8 V337.4 H637.9 M137.6 350.3 V347.7 H140.2 M137.6 374.3 V376.9 H140.2 M247.3 350.3 V347.7 H244.7 M247.3 374.3 V376.9 H244.7 M248.6 349.9 V347.3 H251.2 M248.6 356.9 V359.5 H251.2 M492.9 347.3 H497.7 M495.3 347.3 V350.1 M492.9 359.5 H497.7 M495.3 359.5 V356.7 M248.6 368.4 V365.8 H251.2 M248.6 423 V425.6 H251.2 M596.1 368.4 V365.8 H593.5 M596.1 423 V425.6 H593.5 M607.4 409.3 V406.7 H610 M607.4 414.4 V417 H610 M132.8 220.2 V217.6 H135.4 M132.8 225.8 V228.4 H135.4 M153.3 220.2 V217.6 H155.9 M153.3 225.8 V228.4 H155.9 M357.8 217.6 H362.6 M360.2 217.6 V220.4 M357.8 228.4 H362.6 M360.2 228.4 V225.6 M487 217.6 H491.8 M489.4 217.6 V220.4 M487 228.4 H491.8 M489.4 228.4 V225.6 M557.4 217.6 H562.2 M559.8 217.6 V220.4 M557.4 228.4 H562.2 M559.8 228.4 V225.6" fill="none" stroke="#1a1a1a" stroke-width="1"/></svg>
<svg class="a" style="left:451.5px;top:91.2px" width="10" height="11" viewBox="0 0 10 11"><rect x=".5" y=".5" width="9" height="10" fill="#e4e8ed" stroke="#9aa0aa" stroke-width="1"/><rect x="1.5" y="1.5" width="7" height="6.3" fill="#a9d6f2"/><circle cx="5" cy="4.2" r="2.5" fill="#64b85c"/><rect x="4.4" y="6.2" width="1.2" height="1.6" fill="#8a6a3a"/><rect x="1.5" y="7.3" width="7" height="1.4" fill="#7cc06a"/><rect x="3.5" y="7.7" width="3" height=".9" fill="#e6923a"/></svg>
<svg class="a" style="left:140.2px;top:350px" width="10" height="11" viewBox="0 0 10 11"><rect x=".5" y=".5" width="9" height="10" fill="#e4e8ed" stroke="#9aa0aa" stroke-width="1"/><rect x="1.5" y="1.5" width="7" height="6.3" fill="#a9d6f2"/><circle cx="5" cy="4.2" r="2.5" fill="#64b85c"/><rect x="4.4" y="6.2" width="1.2" height="1.6" fill="#8a6a3a"/><rect x="1.5" y="7.3" width="7" height="1.4" fill="#7cc06a"/><rect x="3.5" y="7.7" width="3" height=".9" fill="#e6923a"/></svg>
<div class="t" style="left:136px;top:89.5px;font-family:'Liberation Sans',sans-serif;font-size:19.6px;letter-spacing:.2px;line-height:22px;height:22px;font-weight:bold;font-style:italic;color:#c3a473">Record Selection</div>
<div class="a" style="left:136.5px;top:175.8px;width:512px;font-family:'Liberation Sans',sans-serif;font-size:13.7px;letter-spacing:.21px;line-height:15.1px;color:#008688;white-space:nowrap">How to create a record selection based on sales &lt; 100000 and the Country<br>chosen via the parameter prompt</div>
<div class="t" style="left:155.3px;top:217.5px;font-family:'Liberation Sans',sans-serif;font-size:9.4px;line-height:11px;height:11px;font-weight:bold;color:#fff">Customer Name</div>
<div class="t" style="left:363.5px;top:217.5px;font-family:'Liberation Sans',sans-serif;font-size:9.4px;line-height:11px;height:11px;font-weight:bold;color:#fff">Region</div>
<div class="t" style="left:492.3px;top:217.5px;font-family:'Liberation Sans',sans-serif;font-size:9.4px;line-height:11px;height:11px;font-weight:bold;color:#fff">Postal Code</div>
<div class="t" style="left:562.8px;top:217.5px;font-family:'Liberation Sans',sans-serif;font-size:9.4px;line-height:11px;height:11px;font-weight:bold;color:#fff">Last Year's</div>
<div class="t" style="left:430.5px;top:320.6px;font-family:'Liberation Sans',sans-serif;font-size:14px;letter-spacing:.25px;line-height:15px;height:15px;color:#f40808">Grand Total</div>
<div class="t" style="left:251.5px;top:347.3px;font-family:'Liberation Sans',sans-serif;font-size:9.9px;line-height:11px;height:11px;color:#1c1cf4">Business Objects Technical Support Site</div>
<div class="a" style="left:508.3px;top:347.3px;width:139.3px;overflow:hidden;white-space:nowrap;font-family:'Liberation Sans',sans-serif;font-size:9.9px;line-height:11px;height:11px;color:#1c1cf4">Feedback on Samples by E-mail</div>
<div class="a" style="left:251.5px;top:366px;width:343px;font-family:'Liberation Sans',sans-serif;font-size:8px;line-height:9px;color:#5f92d8">
<div style="height:9px;white-space:nowrap;text-align:justify;text-align-last:justify;">Copyright ©  2005  Business Objects.  All rights reserved. Business Objects, the  Business</div>
<div style="height:9px;white-space:nowrap;text-align:justify;text-align-last:justify;">Objects logo, Crystal Reports, and Crystal Enterprise are trademarks or registered trademarks</div>
<div style="height:9px;white-space:nowrap;text-align:justify;text-align-last:justify;">of Business Objects SA or its affiliated companies in the United States and other countries.  All</div>
<div style="height:9px;white-space:nowrap;text-align:justify;text-align-last:justify;">other names mentioned herein may be trademarks of their respective owners. Business Objects</div>
<div style="height:9px;white-space:nowrap;text-align:justify;text-align-last:justify;">owns the following U.S. patents, which may cover products that are offered and sold by</div>
<div style="height:9px;white-space:nowrap;">Business Objects: 5,555,403, 6,247,008 B1, 6,578,027 B2, 6,490,593 and 6,289,352.</div>
</div>
<div class="a" style="left:131px;top:74px;width:517px;height:11px;background:#fff"></div>
<svg class="a" style="left:131.5px;top:74px;overflow:visible" width="517" height="11" viewBox="0 0 517 11"><rect x="13.35" y="3.5" width="1" height="3" fill="#222"/><text x="28" y="7.7" text-anchor="middle" font-size="5.9" fill="#222" font-family="Liberation Sans,sans-serif">1</text><rect x="41.05" y="3.5" width="1" height="3" fill="#222"/><text x="55.7" y="7.7" text-anchor="middle" font-size="5.9" fill="#222" font-family="Liberation Sans,sans-serif">2</text><rect x="68.75" y="3.5" width="1" height="3" fill="#222"/><text x="83.4" y="7.7" text-anchor="middle" font-size="5.9" fill="#222" font-family="Liberation Sans,sans-serif">3</text><rect x="96.45" y="3.5" width="1" height="3" fill="#222"/><text x="111.1" y="7.7" text-anchor="middle" font-size="5.9" fill="#222" font-family="Liberation Sans,sans-serif">4</text><rect x="124.15" y="3.5" width="1" height="3" fill="#222"/><text x="138.8" y="7.7" text-anchor="middle" font-size="5.9" fill="#222" font-family="Liberation Sans,sans-serif">5</text><rect x="151.85" y="3.5" width="1" height="3" fill="#222"/><text x="166.5" y="7.7" text-anchor="middle" font-size="5.9" fill="#222" font-family="Liberation Sans,sans-serif">6</text><rect x="179.55" y="3.5" width="1" height="3" fill="#222"/><text x="194.2" y="7.7" text-anchor="middle" font-size="5.9" fill="#222" font-family="Liberation Sans,sans-serif">7</text><rect x="207.25" y="3.5" width="1" height="3" fill="#222"/><text x="221.9" y="7.7" text-anchor="middle" font-size="5.9" fill="#222" font-family="Liberation Sans,sans-serif">8</text><rect x="234.95" y="3.5" width="1" height="3" fill="#222"/><text x="249.6" y="7.7" text-anchor="middle" font-size="5.9" fill="#222" font-family="Liberation Sans,sans-serif">9</text><rect x="262.65" y="3.5" width="1" height="3" fill="#222"/><text x="277.6" y="7.7" text-anchor="middle" font-size="5.9" fill="#222" font-family="Liberation Sans,sans-serif">10</text><rect x="290.35" y="3.5" width="1" height="3" fill="#222"/><text x="305.3" y="7.7" text-anchor="middle" font-size="5.9" fill="#222" font-family="Liberation Sans,sans-serif">11</text><rect x="318.05" y="3.5" width="1" height="3" fill="#222"/><text x="333" y="7.7" text-anchor="middle" font-size="5.9" fill="#222" font-family="Liberation Sans,sans-serif">12</text><rect x="345.75" y="3.5" width="1" height="3" fill="#222"/><text x="360.7" y="7.7" text-anchor="middle" font-size="5.9" fill="#222" font-family="Liberation Sans,sans-serif">13</text><rect x="373.45" y="3.5" width="1" height="3" fill="#222"/><text x="388.4" y="7.7" text-anchor="middle" font-size="5.9" fill="#222" font-family="Liberation Sans,sans-serif">14</text><rect x="401.15" y="3.5" width="1" height="3" fill="#222"/><text x="416.1" y="7.7" text-anchor="middle" font-size="5.9" fill="#222" font-family="Liberation Sans,sans-serif">15</text><rect x="428.85" y="3.5" width="1" height="3" fill="#222"/><text x="443.8" y="7.7" text-anchor="middle" font-size="5.9" fill="#222" font-family="Liberation Sans,sans-serif">16</text><rect x="456.55" y="3.5" width="1" height="3" fill="#222"/><text x="471.5" y="7.7" text-anchor="middle" font-size="5.9" fill="#222" font-family="Liberation Sans,sans-serif">17</text><rect x="484.25" y="3.5" width="1" height="3" fill="#222"/><text x="499.2" y="7.7" text-anchor="middle" font-size="5.9" fill="#222" font-family="Liberation Sans,sans-serif">18</text><rect x="511.95" y="3.5" width="1" height="3" fill="#222"/></svg>
<div class="a" style="left:117px;top:87.5px;width:10.5px;height:83.3px;background:#fff"></div>
<svg class="a" style="left:117px;top:87.5px" width="10.5" height="83.3" viewBox="0 0 10.5 83.3"><rect x="3.8" y="13.85" width="3" height="1" fill="#222"/><text transform="translate(7.6 28.2) rotate(-90)" text-anchor="middle" font-size="6.6" fill="#111" font-family="Liberation Sans,sans-serif">1</text><rect x="3.8" y="41.55" width="3" height="1" fill="#222"/><text transform="translate(7.6 55.9) rotate(-90)" text-anchor="middle" font-size="6.6" fill="#111" font-family="Liberation Sans,sans-serif">2</text><rect x="3.8" y="69.25" width="3" height="1" fill="#222"/></svg>
<div class="a" style="left:117px;top:173.3px;width:10.5px;height:62px;background:#fff"></div>
<svg class="a" style="left:117px;top:173.3px" width="10.5" height="62" viewBox="0 0 10.5 62"><rect x="3.8" y="13.85" width="3" height="1" fill="#222"/><text transform="translate(7.6 28.2) rotate(-90)" text-anchor="middle" font-size="6.6" fill="#111" font-family="Liberation Sans,sans-serif">1</text><rect x="3.8" y="41.55" width="3" height="1" fill="#222"/><text transform="translate(7.6 55.9) rotate(-90)" text-anchor="middle" font-size="6.6" fill="#111" font-family="Liberation Sans,sans-serif">2</text></svg>
<div class="a" style="left:117px;top:238px;width:10.5px;height:16.8px;background:#fff"></div>
<svg class="a" style="left:117px;top:238px" width="10.5" height="16.8" viewBox="0 0 10.5 16.8"><rect x="3.8" y="13.85" width="3" height="1" fill="#222"/></svg>
<div class="a" style="left:117px;top:257.3px;width:10.5px;height:11.5px;background:#fff"></div>
<div class="a" style="left:117px;top:271.3px;width:10.5px;height:24.5px;background:#fff"></div>
<svg class="a" style="left:117px;top:271.3px" width="10.5" height="24.5" viewBox="0 0 10.5 24.5"><rect x="3.8" y="13.85" width="3" height="1" fill="#222"/></svg>
<div class="a" style="left:117px;top:298.3px;width:10.5px;height:41.7px;background:#fff"></div>
<svg class="a" style="left:117px;top:298.3px" width="10.5" height="41.7" viewBox="0 0 10.5 41.7"><rect x="3.8" y="13.85" width="3" height="1" fill="#222"/><text transform="translate(7.6 28.2) rotate(-90)" text-anchor="middle" font-size="6.6" fill="#111" font-family="Liberation Sans,sans-serif">1</text></svg>
<div class="a" style="left:117px;top:342.3px;width:10.5px;height:93.7px;background:#fff"></div>
<svg class="a" style="left:117px;top:342.3px" width="10.5" height="93.7" viewBox="0 0 10.5 93.7"><rect x="3.8" y="12.95" width="3" height="1" fill="#222"/><text transform="translate(7.6 27.3) rotate(-90)" text-anchor="middle" font-size="6.6" fill="#111" font-family="Liberation Sans,sans-serif">1</text><rect x="3.8" y="40.65" width="3" height="1" fill="#222"/><text transform="translate(7.6 55) rotate(-90)" text-anchor="middle" font-size="6.6" fill="#111" font-family="Liberation Sans,sans-serif">2</text><rect x="3.8" y="68.35" width="3" height="1" fill="#222"/><text transform="translate(7.6 82.7) rotate(-90)" text-anchor="middle" font-size="6.6" fill="#111" font-family="Liberation Sans,sans-serif">3</text></svg>
<div class="a" style="left:760px;top:70.5px;width:182px;height:14.5px;background:linear-gradient(#69717d,#565d68 50%,#484e58)"></div><div class="t" style="left:763.5px;top:73.5px;font-size:8.3px;color:#ececec;letter-spacing:-0.119px;">Report Tree</div><svg class="a" style="left:919px;top:74.5px" width="5" height="7" viewBox="0 0 5 7"><rect x="1.3" y=".3" width="2.4" height="3.6" fill="none" stroke="#f2f2f2" stroke-width=".7"/><path d="M0 4.2 H5 M2.5 4.3 V7" stroke="#f2f2f2" stroke-width=".8"/></svg><svg class="a" style="left:930.8px;top:75px" width="6" height="6" viewBox="0 0 6 6"><path d="M.6 .6 L5.4 5.4 M5.4 .6 L.6 5.4" stroke="#f2f2f2" stroke-width="1"/></svg>
<div class="a" style="left:757.8px;top:70px;width:2.2px;height:641px;background:#525252"></div>
<div class="a" style="left:760px;top:85px;width:169px;height:274.5px;background:#fff;overflow:hidden" id="tree">
<svg class="a" style="left:17.5px;top:1.1px" width="9.5" height="11" viewBox="0 0 9.5 11"><rect x=".5" y=".5" width="8.5" height="10" fill="#eef1f8" stroke="#7f8fb5" stroke-width=".9"/><rect x="1.5" y="1.5" width="6.5" height="8" fill="#dfe5f2"/></svg>
<div class="a" style="left:29.5px;top:0.6px;width:25px;height:11.5px;background:#efefef"></div>
<div class="t" style="left:31px;top:1.3px;font-size:8.3px;color:#111;letter-spacing:-0.402px;">Page1</div>
<svg class="a" style="left:31.4px;top:12.83px" width="9.5" height="11" viewBox="0 0 9.5 11"><rect x=".5" y=".5" width="8.5" height="10" fill="#f4f6f9" stroke="#6f7f9f" stroke-width=".9"/><rect x="1.3" y="1.3" width="6.9" height="2.6" fill="#f5c63a"/><rect x="1.3" y="4.3" width="6.9" height="5.5" fill="#7fb77f"/></svg>
<div class="t" style="left:44.9px;top:13.03px;font-size:8.3px;color:#111;letter-spacing:-0.138px;">ReportTitle1</div>
<svg class="a" style="left:44.8px;top:23.26px" width="11.5" height="12.5" viewBox="0 0 11.5 12.5"><path d="M2.6 7.4 L8 1.6 10.3 3.7 4.9 9.5z" fill="#f7d353" stroke="#c8962c" stroke-width=".6"/><path d="M2.6 7.4 L4.9 9.5 1.2 10.6z" fill="#e9c79a" stroke="#b98a4a" stroke-width=".5"/><path d="M8 1.6 L9 .6 11.3 2.7 10.3 3.7z" fill="#f2a6a0" stroke="#c98a80" stroke-width=".4"/><path d="M0 12 H11" stroke="#555" stroke-width=".7"/></svg>
<div class="t" style="left:58.8px;top:24.76px;font-size:8.3px;color:#111;letter-spacing:-0.396px;">Line1</div>
<div class="t" style="left:46.5px;top:35.19px;font-family:'Liberation Serif',serif;font-weight:bold;font-size:11px;line-height:12px;height:12px;color:#d25a62">A</div>
<div class="t" style="left:58.8px;top:36.49px;font-size:8.3px;color:#111;letter-spacing:0.137px;">Text1</div>
<div class="t" style="left:46.5px;top:46.92px;font-family:'Liberation Serif',serif;font-weight:bold;font-size:11px;line-height:12px;height:12px;color:#d25a62">A</div>
<div class="t" style="left:58.8px;top:48.22px;font-size:8.3px;color:#111;letter-spacing:-0.347px;">Field1</div>
<div class="t" style="left:46.5px;top:58.65px;font-family:'Liberation Serif',serif;font-weight:bold;font-size:11px;line-height:12px;height:12px;color:#d25a62">A</div>
<div class="t" style="left:58.8px;top:59.95px;font-size:8.3px;color:#111;letter-spacing:-0.347px;">Field2</div>
<svg class="a" style="left:44.8px;top:71.18px" width="11" height="11" viewBox="0 0 11 11"><rect x=".5" y=".5" width="10" height="10" fill="#e4e8ed" stroke="#8e949e" stroke-width="1"/><rect x="1.6" y="1.6" width="7.8" height="6.4" fill="#a9d6f2"/><circle cx="5.5" cy="4.3" r="2.6" fill="#64b85c"/><rect x="4.9" y="6.3" width="1.2" height="1.7" fill="#8a6a3a"/><rect x="1.6" y="7.6" width="7.8" height="1.4" fill="#7cc06a"/><rect x="4" y="7.9" width="3" height="1" fill="#e6923a"/></svg>
<div class="t" style="left:58.8px;top:71.68px;font-size:8.3px;color:#111;letter-spacing:-0.232px;">Picture1</div>
<svg class="a" style="left:31.4px;top:83.21px" width="9.5" height="11" viewBox="0 0 9.5 11"><rect x=".5" y=".5" width="8.5" height="10" fill="#f4f6f9" stroke="#6f7f9f" stroke-width=".9"/><rect x="1.3" y="1.3" width="6.9" height="2.6" fill="#f5c63a"/><rect x="1.3" y="4.3" width="6.9" height="5.5" fill="#e6ebf5"/></svg>
<div class="t" style="left:44.9px;top:83.41px;font-size:8.3px;color:#111;letter-spacing:-0.325px;">PageHeader1</div>
<div class="t" style="left:46.5px;top:93.84px;font-family:'Liberation Serif',serif;font-weight:bold;font-size:11px;line-height:12px;height:12px;color:#d25a62">A</div>
<div class="t" style="left:58.8px;top:95.14px;font-size:8.3px;color:#111;letter-spacing:0.137px;">Text4</div>
<div class="t" style="left:46.5px;top:105.57px;font-family:'Liberation Serif',serif;font-weight:bold;font-size:11px;line-height:12px;height:12px;color:#d25a62">A</div>
<div class="t" style="left:58.8px;top:106.87px;font-size:8.3px;color:#111;letter-spacing:0.137px;">Text2</div>
<div class="t" style="left:46.5px;top:117.3px;font-family:'Liberation Serif',serif;font-weight:bold;font-size:11px;line-height:12px;height:12px;color:#d25a62">A</div>
<div class="t" style="left:58.8px;top:118.6px;font-size:8.3px;color:#111;letter-spacing:0.137px;">Text3</div>
<div class="t" style="left:46.5px;top:129.03px;font-family:'Liberation Serif',serif;font-weight:bold;font-size:11px;line-height:12px;height:12px;color:#d25a62">A</div>
<div class="t" style="left:58.8px;top:130.33px;font-size:8.3px;color:#111;letter-spacing:0.137px;">Text5</div>
<div class="t" style="left:46.5px;top:140.76px;font-family:'Liberation Serif',serif;font-weight:bold;font-size:11px;line-height:12px;height:12px;color:#d25a62">A</div>
<div class="t" style="left:58.8px;top:142.06px;font-size:8.3px;color:#111;letter-spacing:0.137px;">Text6</div>
<div class="t" style="left:46.5px;top:152.49px;font-family:'Liberation Serif',serif;font-weight:bold;font-size:11px;line-height:12px;height:12px;color:#d25a62">A</div>
<div class="t" style="left:58.8px;top:153.79px;font-size:8.3px;color:#111;letter-spacing:0.137px;">Text7</div>
<svg class="a" style="left:33.4px;top:167.02px" width="7" height="8" viewBox="0 0 7 8"><rect x="0" y="0" width="2.6" height="2.8" fill="#efa62a"/><rect x="3.6" y="0" width="2.6" height="2.8" fill="#efa62a"/><rect x="0" y="4" width="2.6" height="2.8" fill="#efa62a"/><rect x="3.6" y="4" width="2.6" height="2.8" fill="#efa62a"/></svg>
<div class="t" style="left:44.9px;top:165.52px;font-size:8.3px;color:#111;letter-spacing:-0.178px;">Data1</div>
<div class="t" style="left:46.5px;top:175.95px;font-family:'Liberation Serif',serif;font-weight:bold;font-size:11px;line-height:12px;height:12px;color:#d25a62">A</div>
<div class="t" style="left:58.8px;top:177.25px;font-size:8.3px;color:#111;letter-spacing:-0.347px;">Field3</div>
<svg class="a" style="left:33.4px;top:190.48px" width="7" height="8" viewBox="0 0 7 8"><rect x="0" y="0" width="2.6" height="2.8" fill="#efa62a"/><rect x="3.6" y="0" width="2.6" height="2.8" fill="#efa62a"/><rect x="0" y="4" width="2.6" height="2.8" fill="#efa62a"/><rect x="3.6" y="4" width="2.6" height="2.8" fill="#efa62a"/></svg>
<div class="t" style="left:44.9px;top:188.98px;font-size:8.3px;color:#111;letter-spacing:-0.178px;">Data2</div>
<div class="t" style="left:46.5px;top:199.41px;font-family:'Liberation Serif',serif;font-weight:bold;font-size:11px;line-height:12px;height:12px;color:#d25a62">A</div>
<div class="t" style="left:58.8px;top:200.71px;font-size:8.3px;color:#111;letter-spacing:-0.347px;">Field4</div>
<div class="t" style="left:46.5px;top:211.14px;font-family:'Liberation Serif',serif;font-weight:bold;font-size:11px;line-height:12px;height:12px;color:#d25a62">A</div>
<div class="t" style="left:58.8px;top:212.44px;font-size:8.3px;color:#111;letter-spacing:-0.347px;">Field5</div>
<div class="t" style="left:46.5px;top:222.87px;font-family:'Liberation Serif',serif;font-weight:bold;font-size:11px;line-height:12px;height:12px;color:#d25a62">A</div>
<div class="t" style="left:58.8px;top:224.17px;font-size:8.3px;color:#111;letter-spacing:-0.347px;">Field6</div>
<div class="t" style="left:46.5px;top:234.6px;font-family:'Liberation Serif',serif;font-weight:bold;font-size:11px;line-height:12px;height:12px;color:#d25a62">A</div>
<div class="t" style="left:58.8px;top:235.9px;font-size:8.3px;color:#111;letter-spacing:-0.347px;">Field8</div>
<svg class="a" style="left:33.4px;top:249.13px" width="7" height="8" viewBox="0 0 7 8"><rect x="0" y="0" width="2.6" height="2.8" fill="#efa62a"/><rect x="3.6" y="0" width="2.6" height="2.8" fill="#efa62a"/><rect x="0" y="4" width="2.6" height="2.8" fill="#efa62a"/><rect x="3.6" y="4" width="2.6" height="2.8" fill="#efa62a"/></svg>
<div class="t" style="left:44.9px;top:247.63px;font-size:8.3px;color:#111;letter-spacing:-0.178px;">Data3</div>
<div class="t" style="left:46.5px;top:258.06px;font-family:'Liberation Serif',serif;font-weight:bold;font-size:11px;line-height:12px;height:12px;color:#d25a62">A</div>
<div class="t" style="left:58.8px;top:259.36px;font-size:8.3px;color:#111;letter-spacing:-0.347px;">Field9</div>
<svg class="a" style="left:0px;top:0px;pointer-events:none" width="170" height="275" viewBox="0 0 170 275"><path d="M11.4 6.3 h4 M25.3 18.03 h4 M36.3 29.76 h8.5 M36.3 41.49 h8.5 M36.3 53.22 h8.5 M36.3 64.95 h8.5 M36.3 76.68 h8.5 M25.3 88.41 h4 M36.3 100.14 h8.5 M36.3 111.87 h8.5 M36.3 123.6 h8.5 M36.3 135.33 h8.5 M36.3 147.06 h8.5 M36.3 158.79 h8.5 M25.3 170.52 h4 M36.3 182.25 h8.5 M25.3 193.98 h4 M36.3 205.71 h8.5 M36.3 217.44 h8.5 M36.3 229.17 h8.5 M36.3 240.9 h8.5 M25.3 252.63 h4 M36.3 264.36 h8.5 M22.1 11.8 V249.43 M22.1 255.83 V280 M36.3 23.53 V76.68 M36.3 93.91 V158.79 M36.3 176.02 V182.25 M36.3 199.48 V240.9 M36.3 258.13 V264.36 " fill="none" stroke="#858990" stroke-width=".8" stroke-dasharray="1 1.1"/><rect x="5" y="3.1" width="6.4" height="6.4" rx="1" fill="#fff" stroke="#9a9ea6" stroke-width=".8"/><path d="M6.5 6.3 h3.4" stroke="#3a57a6" stroke-width="1"/><rect x="18.9" y="14.83" width="6.4" height="6.4" rx="1" fill="#fff" stroke="#9a9ea6" stroke-width=".8"/><path d="M20.4 18.03 h3.4" stroke="#3a57a6" stroke-width="1"/><rect x="18.9" y="85.21" width="6.4" height="6.4" rx="1" fill="#fff" stroke="#9a9ea6" stroke-width=".8"/><path d="M20.4 88.41 h3.4" stroke="#3a57a6" stroke-width="1"/><rect x="18.9" y="167.32" width="6.4" height="6.4" rx="1" fill="#fff" stroke="#9a9ea6" stroke-width=".8"/><path d="M20.4 170.52 h3.4" stroke="#3a57a6" stroke-width="1"/><rect x="18.9" y="190.78" width="6.4" height="6.4" rx="1" fill="#fff" stroke="#9a9ea6" stroke-width=".8"/><path d="M20.4 193.98 h3.4" stroke="#3a57a6" stroke-width="1"/><rect x="18.9" y="249.43" width="6.4" height="6.4" rx="1" fill="#fff" stroke="#9a9ea6" stroke-width=".8"/><path d="M20.4 252.63 h3.4" stroke="#3a57a6" stroke-width="1"/></svg>
<svg class="a" style="left:31.4px;top:270.89px" width="9.5" height="11" viewBox="0 0 9.5 11"><rect x=".5" y=".5" width="8.5" height="10" fill="#f4f6f9" stroke="#6f7f9f" stroke-width=".9"/><rect x="1.3" y="1.3" width="6.9" height="2.6" fill="#f5c63a"/><rect x="1.3" y="4.3" width="6.9" height="5.5" fill="#e6ebf5"/></svg>
<div class="t" style="left:44.9px;top:271.09px;font-size:8.3px;color:#111;letter-spacing:-0.3px;">ReportSummary1</div>
</div>
<div class="a" style="left:929px;top:85px;width:11px;height:274.5px;background:#eceef0"></div>
<div class="a" style="left:929.3px;top:106px;width:10.5px;height:166px;border-radius:2px;border:1px solid #9da2aa;background:linear-gradient(90deg,#e9ebee,#cfd3d8 50%,#b9bec5)"></div>
<div class="a" style="left:932.2px;top:186px;width:5px;height:5px;background:repeating-linear-gradient(#6b7078 0 1px,transparent 1px 2px)"></div>
<div class="a" style="left:932.2px;top:92px;border:2.5px solid transparent;border-bottom:3px solid #555;border-top:0"></div>
<div class="a" style="left:932.2px;top:351.5px;border:2.5px solid transparent;border-top:3px solid #555;border-bottom:0"></div>
<div class="a" style="left:760px;top:359.5px;width:180px;height:11.5px;background:#e9ebed"></div>
<div class="a" style="left:773.5px;top:360px;width:89.5px;height:10.5px;border-radius:2px;border:1px solid #9da2aa;background:linear-gradient(#eceef0,#d2d6db 50%,#bcc1c8)"></div>
<div class="a" style="left:815.5px;top:363px;width:5px;height:5px;background:repeating-linear-gradient(90deg,#6b7078 0 1px,transparent 1px 2px)"></div>
<div class="a" style="left:764px;top:362.7px;border:2.5px solid transparent;border-right:3px solid #444;border-left:0"></div>
<div class="a" style="left:921px;top:362.7px;border:2.5px solid transparent;border-left:3px solid #444;border-right:0"></div>
<div class="a" style="left:765px;top:371px;width:38px;height:16.5px;border-radius:0 0 3px 3px;background:linear-gradient(#c6cad0,#dcdfe3 55%,#e8eaed);border:1px solid #9ea3ab;border-top:0"></div>
<svg class="a" style="left:768.5px;top:374.5px" width="9" height="10" viewBox="0 0 9 10"><rect x=".5" y=".5" width="8" height="9" rx="2" fill="#f5b62a" stroke="#c98a10" stroke-width=".9"/><ellipse cx="4.5" cy="2.5" rx="3.2" ry="1.2" fill="#fbe08a"/></svg>
<div class="t" style="left:781px;top:375px;font-size:8.3px;color:#222;letter-spacing:-0.168px;">Data</div>
<div class="a" style="left:804.5px;top:371px;width:63.5px;height:17px;border-radius:0 0 3px 3px;background:#f6f7f8;border:1px solid #aeb2b8;border-top:0"></div>
<svg class="a" style="left:809.5px;top:374px" width="8" height="11" viewBox="0 0 8 11"><rect x="0" y="0" width="2.5" height="2.5" fill="#3f6fd0"/><path d="M1.2 2.5 V9 H4 M1.2 5.5 H4" fill="none" stroke="#777" stroke-width=".7"/><rect x="4" y="4" width="3" height="2.8" fill="#5aa24a"/><rect x="4" y="7.8" width="3" height="2.8" fill="#5aa24a"/></svg>
<div class="t" style="left:820px;top:375px;font-size:8.3px;color:#222;letter-spacing:-0.119px;">Report Tree</div>
<div class="a" style="left:760px;top:392px;width:182px;height:15px;background:linear-gradient(#e2e4e8,#d0d3d8 50%,#c2c6cc)"></div>
<div class="t" style="left:763.5px;top:394.3px;font-size:8.3px;color:#4a5060;letter-spacing:-0.191px;">Properties</div>
<svg class="a" style="left:919px;top:395.7px" width="5" height="7" viewBox="0 0 5 7"><rect x="1.3" y=".3" width="2.4" height="3.6" fill="none" stroke="#222" stroke-width=".7"/><path d="M0 4.2 H5 M2.5 4.3 V7" stroke="#222" stroke-width=".8"/></svg>
<svg class="a" style="left:930.8px;top:396.2px" width="6" height="6" viewBox="0 0 6 6"><path d="M.6 .6 L5.4 5.4 M5.4 .6 L.6 5.4" stroke="#222" stroke-width="1"/></svg>
<div class="a" style="left:760px;top:407px;width:182px;height:14px;background:#fff;border-top:1px solid #b9bdc3"></div>
<div class="t" style="left:764.5px;top:408.8px;font-size:8.3px;color:#111;letter-spacing:0.079px;font-weight:bold;">Page1</div>
<div class="t" style="left:794.7px;top:408.8px;font-size:8.3px;color:#111;letter-spacing:-0.251px;">ReportPage</div>
<div class="a" style="left:929px;top:408.3px;width:10.5px;height:12px;border:1px solid #9ea3ab;border-radius:1px;background:linear-gradient(#f1f2f4,#cfd3d8)"></div>
<div class="dd" style="left:931.8px;top:413.5px;border-top-color:#111"></div>
<div class="a" style="left:760px;top:421px;width:182px;height:19.5px;background:linear-gradient(#c9cdd2,#b9bdc4 55%,#9fa4ac 92%,#8c9199)"></div>
<div class="a" style="left:760.7px;top:423px;width:17.3px;height:15.8px;background:linear-gradient(#fcdaa2,#f9c266 50%,#fbd28c);border:1px solid #e6ae50;border-radius:1.5px"></div>
<div class="a" style="left:798px;top:423px;width:17.5px;height:15.8px;background:linear-gradient(#fcdaa2,#f9c266 50%,#fbd28c);border:1px solid #e6ae50;border-radius:1.5px"></div>
<svg class="a" style="left:763.5px;top:425.5px" width="12" height="11" viewBox="0 0 12 11"><rect x=".4" y=".4" width="4.2" height="3.8" fill="#fff" stroke="#5a6a8a" stroke-width=".8"/><rect x=".4" y="6.4" width="4.2" height="3.8" fill="#fff" stroke="#5a6a8a" stroke-width=".8"/><rect x="1.5" y="1.8" width="2" height="1" fill="#223"/><rect x="1.5" y="7.8" width="2" height="1" fill="#223"/><path d="M6 1.5 H11 M6 3.5 H11 M6 7.5 H11 M6 9.5 H11" stroke="#8d98ad" stroke-width=".9" stroke-dasharray="2 .8"/></svg>
<div class="t" style="left:781px;top:424px;font-family:'Liberation Serif',serif;font-weight:bold;font-size:7.5px;line-height:7px;height:7px;color:#3a5fc0">A</div>
<div class="t" style="left:781.3px;top:430.5px;font-family:'Liberation Serif',serif;font-weight:bold;font-size:7.5px;line-height:7px;height:7px;color:#a83a3a">Z</div>
<svg class="a" style="left:788px;top:425px" width="6" height="12" viewBox="0 0 6 12"><path d="M3 0 V10" stroke="#111" stroke-width="1"/><path d="M.5 7.5 L3 11 5.5 7.5z" fill="#111"/></svg>
<div class="a" style="left:796px;top:424px;width:1px;height:14px;background:#8f949c"></div>
<svg class="a" style="left:802.5px;top:427px" width="9" height="8" viewBox="0 0 9 8"><rect x=".5" y=".5" width="8" height="7" fill="#fff" stroke="#5a6a8a" stroke-width=".9"/><path d="M1.7 2.5 H2.7 M1.7 4 H2.7 M1.7 5.5 H2.7" stroke="#3a57a6" stroke-width=".9"/><path d="M3.5 2.5 H7.5 M3.5 4 H7.5 M3.5 5.5 H7.5" stroke="#8d98ad" stroke-width=".8"/></svg>
<svg class="a" style="left:820.5px;top:425px" width="9" height="12" viewBox="0 0 9 12"><path d="M5.5 0 L1 6 4 6 2.5 11.5 8 4.5 5 4.5 7.5 0z" fill="#f6b93a" stroke="#d98a1e" stroke-width=".6"/></svg>
<div class="a" style="left:760px;top:440.5px;width:169px;height:226px;background:#cdd0d5"></div>
<div class="a" style="left:771px;top:442.1px;width:157.6px;height:11.99px;background:#dfe1e5"></div>
<div class="a" style="left:771px;top:442.7px;width:64px;height:10.59px;background:#fff;overflow:hidden"><div class="t" style="left:2.5px;top:0.4px;font-size:8.3px;color:#111;letter-spacing:-0.309px;">FirstPageSource</div></div>
<div class="a" style="left:835.8px;top:442.7px;width:92.8px;height:10.59px;background:#fff;overflow:hidden"><div class="t" style="left:2.6px;top:0.4px;font-size:8.3px;color:#111;letter-spacing:-0.218px;">7</div></div>
<div class="a" style="left:771px;top:453.79px;width:157.6px;height:11.99px;background:#dfe1e5"></div>
<div class="a" style="left:771px;top:454.39px;width:64px;height:10.59px;background:#fff;overflow:hidden"><div class="t" style="left:2.5px;top:0.4px;font-size:8.3px;color:#111;letter-spacing:-0.293px;">OtherPagesSourc</div></div>
<div class="a" style="left:835.8px;top:454.39px;width:92.8px;height:10.59px;background:#fff;overflow:hidden"><div class="t" style="left:2.6px;top:0.4px;font-size:8.3px;color:#111;letter-spacing:-0.218px;">7</div></div>
<svg class="a" style="left:762.3px;top:467.98px" width="6.5" height="6.5" viewBox="0 0 6.5 6.5"><rect x=".4" y=".4" width="5.7" height="5.7" fill="#fff" stroke="#2a2a2a" stroke-width=".9"/><path d="M1.6 3.25 H4.9" stroke="#000" stroke-width="1"/></svg>
<div class="t" style="left:773.5px;top:466.68px;font-size:8.3px;color:#111;letter-spacing:-0.122px;font-weight:bold;">Внешний вид</div>
<div class="a" style="left:771px;top:477.17px;width:157.6px;height:11.99px;background:#dfe1e5"></div>
<div class="a" style="left:771px;top:477.77px;width:64px;height:10.59px;background:#fff;overflow:hidden"><div class="t" style="left:2.5px;top:0.4px;font-size:8.3px;color:#111;letter-spacing:-0.242px;">Border</div></div>
<div class="a" style="left:835.8px;top:477.77px;width:92.8px;height:10.59px;background:#fff;overflow:hidden"><div class="t" style="left:2.6px;top:0.4px;font-size:8.3px;color:#111;letter-spacing:-0.14px;">(Border)</div></div>
<svg class="a" style="left:762.3px;top:479.67px" width="6.5" height="6.5" viewBox="0 0 6.5 6.5"><rect x=".4" y=".4" width="5.7" height="5.7" fill="#fff" stroke="#2a2a2a" stroke-width=".9"/><path d="M1.6 3.25 H4.9 M3.25 1.6 V4.9" stroke="#000" stroke-width="1"/></svg>
<div class="a" style="left:771px;top:488.86px;width:157.6px;height:11.99px;background:#dfe1e5"></div>
<div class="a" style="left:771px;top:489.46px;width:64px;height:10.59px;background:#fff;overflow:hidden"><div class="t" style="left:2.5px;top:0.4px;font-size:8.3px;color:#111;letter-spacing:-0.49px;">Columns</div></div>
<div class="a" style="left:835.8px;top:489.46px;width:92.8px;height:10.59px;background:#fff;overflow:hidden"><div class="t" style="left:2.6px;top:0.4px;font-size:8.3px;color:#111;letter-spacing:-0.376px;">(PageColumns)</div></div>
<svg class="a" style="left:762.3px;top:491.36px" width="6.5" height="6.5" viewBox="0 0 6.5 6.5"><rect x=".4" y=".4" width="5.7" height="5.7" fill="#fff" stroke="#2a2a2a" stroke-width=".9"/><path d="M1.6 3.25 H4.9 M3.25 1.6 V4.9" stroke="#000" stroke-width="1"/></svg>
<div class="a" style="left:771px;top:500.55px;width:157.6px;height:11.99px;background:#dfe1e5"></div>
<div class="a" style="left:771px;top:501.15px;width:64px;height:10.59px;background:#fff;overflow:hidden"><div class="t" style="left:2.5px;top:0.4px;font-size:8.3px;color:#111;letter-spacing:-0.451px;">Fill</div></div>
<div class="a" style="left:835.8px;top:501.15px;width:92.8px;height:10.59px;background:#fff;overflow:hidden"><div class="t" style="left:2.6px;top:0.4px;font-size:8.3px;color:#111;letter-spacing:-0.466px;">Solid</div></div>
<svg class="a" style="left:762.3px;top:503.05px" width="6.5" height="6.5" viewBox="0 0 6.5 6.5"><rect x=".4" y=".4" width="5.7" height="5.7" fill="#fff" stroke="#2a2a2a" stroke-width=".9"/><path d="M1.6 3.25 H4.9 M3.25 1.6 V4.9" stroke="#000" stroke-width="1"/></svg>
<div class="a" style="left:771px;top:512.24px;width:157.6px;height:11.99px;background:#dfe1e5"></div>
<div class="a" style="left:771px;top:512.84px;width:64px;height:10.59px;background:#fff;overflow:hidden"><div class="t" style="left:2.5px;top:0.4px;font-size:8.3px;color:#111;letter-spacing:-0.158px;">Watermark</div></div>
<div class="a" style="left:835.8px;top:512.84px;width:92.8px;height:10.59px;background:#fff;overflow:hidden"><div class="t" style="left:2.6px;top:0.4px;font-size:8.3px;color:#111;letter-spacing:0.219px;font-weight:bold;">(Watermark)</div></div>
<svg class="a" style="left:762.3px;top:514.74px" width="6.5" height="6.5" viewBox="0 0 6.5 6.5"><rect x=".4" y=".4" width="5.7" height="5.7" fill="#fff" stroke="#2a2a2a" stroke-width=".9"/><path d="M1.6 3.25 H4.9 M3.25 1.6 V4.9" stroke="#000" stroke-width="1"/></svg>
<svg class="a" style="left:762.3px;top:526.43px" width="6.5" height="6.5" viewBox="0 0 6.5 6.5"><rect x=".4" y=".4" width="5.7" height="5.7" fill="#fff" stroke="#2a2a2a" stroke-width=".9"/><path d="M1.6 3.25 H4.9" stroke="#000" stroke-width="1"/></svg>
<div class="t" style="left:773.5px;top:525.13px;font-size:8.3px;color:#111;letter-spacing:0.473px;font-weight:bold;">Данные</div>
<div class="a" style="left:771px;top:535.62px;width:157.6px;height:11.99px;background:#dfe1e5"></div>
<div class="a" style="left:771px;top:536.22px;width:64px;height:10.59px;background:#fff;overflow:hidden"><div class="t" style="left:2.5px;top:0.4px;font-size:8.3px;color:#111;letter-spacing:-0.231px;">OutlineExpressior</div></div>
<div class="a" style="left:835.8px;top:536.22px;width:92.8px;height:10.59px;background:#fff;overflow:hidden"></div>
<svg class="a" style="left:762.3px;top:549.81px" width="6.5" height="6.5" viewBox="0 0 6.5 6.5"><rect x=".4" y=".4" width="5.7" height="5.7" fill="#fff" stroke="#2a2a2a" stroke-width=".9"/><path d="M1.6 3.25 H4.9" stroke="#000" stroke-width="1"/></svg>
<div class="t" style="left:773.5px;top:548.51px;font-size:8.3px;color:#111;letter-spacing:0.349px;font-weight:bold;">Поведение</div>
<div class="a" style="left:771px;top:559px;width:157.6px;height:11.99px;background:#dfe1e5"></div>
<div class="a" style="left:771px;top:559.6px;width:64px;height:10.59px;background:#fff;overflow:hidden"><div class="t" style="left:2.5px;top:0.4px;font-size:8.3px;color:#111;letter-spacing:-0.272px;">MirrorMargins</div></div>
<div class="a" style="left:835.8px;top:559.6px;width:92.8px;height:10.59px;background:#fff;overflow:hidden"><div class="t" style="left:2.6px;top:0.4px;font-size:8.3px;color:#111;letter-spacing:-0.394px;">False</div></div>
<div class="a" style="left:771px;top:570.69px;width:157.6px;height:11.99px;background:#dfe1e5"></div>
<div class="a" style="left:771px;top:571.29px;width:64px;height:10.59px;background:#fff;overflow:hidden"><div class="t" style="left:2.5px;top:0.4px;font-size:8.3px;color:#111;letter-spacing:-0.32px;">PrintOnPreviousP</div></div>
<div class="a" style="left:835.8px;top:571.29px;width:92.8px;height:10.59px;background:#fff;overflow:hidden"><div class="t" style="left:2.6px;top:0.4px;font-size:8.3px;color:#111;letter-spacing:-0.394px;">False</div></div>
<div class="a" style="left:771px;top:582.38px;width:157.6px;height:11.99px;background:#dfe1e5"></div>
<div class="a" style="left:771px;top:582.98px;width:64px;height:10.59px;background:#fff;overflow:hidden"><div class="t" style="left:2.5px;top:0.4px;font-size:8.3px;color:#111;letter-spacing:-0.394px;">ResetPageNumbe</div></div>
<div class="a" style="left:835.8px;top:582.98px;width:92.8px;height:10.59px;background:#fff;overflow:hidden"><div class="t" style="left:2.6px;top:0.4px;font-size:8.3px;color:#111;letter-spacing:-0.394px;">False</div></div>
<div class="a" style="left:771px;top:594.07px;width:157.6px;height:11.99px;background:#dfe1e5"></div>
<div class="a" style="left:771px;top:594.67px;width:64px;height:10.59px;background:#fff;overflow:hidden"><div class="t" style="left:2.5px;top:0.4px;font-size:8.3px;color:#111;letter-spacing:-0.254px;">StartOnOddPage</div></div>
<div class="a" style="left:835.8px;top:594.67px;width:92.8px;height:10.59px;background:#fff;overflow:hidden"><div class="t" style="left:2.6px;top:0.4px;font-size:8.3px;color:#111;letter-spacing:-0.394px;">False</div></div>
<div class="a" style="left:771px;top:605.76px;width:157.6px;height:11.99px;background:#dfe1e5"></div>
<div class="a" style="left:771px;top:606.36px;width:64px;height:10.59px;background:#fff;overflow:hidden"><div class="t" style="left:2.5px;top:0.4px;font-size:8.3px;color:#111;letter-spacing:-0.215px;">TitleBeforeHeade</div></div>
<div class="a" style="left:835.8px;top:606.36px;width:92.8px;height:10.59px;background:#fff;overflow:hidden"><div class="t" style="left:2.6px;top:0.4px;font-size:8.3px;color:#111;letter-spacing:-0.158px;">True</div></div>
<div class="a" style="left:771px;top:617.45px;width:157.6px;height:11.99px;background:#dfe1e5"></div>
<div class="a" style="left:771px;top:618.05px;width:64px;height:10.59px;background:#fff;overflow:hidden"><div class="t" style="left:2.5px;top:0.4px;font-size:8.3px;color:#111;letter-spacing:-0.435px;">Visible</div></div>
<div class="a" style="left:835.8px;top:618.05px;width:92.8px;height:10.59px;background:#fff;overflow:hidden"><div class="t" style="left:2.6px;top:0.4px;font-size:8.3px;color:#111;letter-spacing:-0.158px;">True</div></div>
<svg class="a" style="left:762.3px;top:631.64px" width="6.5" height="6.5" viewBox="0 0 6.5 6.5"><rect x=".4" y=".4" width="5.7" height="5.7" fill="#fff" stroke="#2a2a2a" stroke-width=".9"/><path d="M1.6 3.25 H4.9" stroke="#000" stroke-width="1"/></svg>
<div class="t" style="left:773.5px;top:630.34px;font-size:8.3px;color:#111;letter-spacing:0.206px;font-weight:bold;">Проектирование</div>
<div class="a" style="left:771px;top:640.83px;width:157.6px;height:11.99px;background:#dfe1e5"></div>
<div class="a" style="left:771px;top:641.43px;width:64px;height:10.59px;background:#fff;overflow:hidden"><div class="t" style="left:2.5px;top:0.4px;font-size:8.3px;color:#111;letter-spacing:-0.335px;">(Name)</div></div>
<div class="a" style="left:835.8px;top:641.43px;width:92.8px;height:10.59px;background:#fff;overflow:hidden"><div class="t" style="left:2.6px;top:0.4px;font-size:8.3px;color:#111;letter-spacing:0.079px;font-weight:bold;">Page1</div></div>
<div class="a" style="left:771px;top:652.52px;width:157.6px;height:11.99px;background:#dfe1e5"></div>
<div class="a" style="left:771px;top:653.12px;width:64px;height:10.59px;background:#fff;overflow:hidden"><div class="t" style="left:2.5px;top:0.4px;font-size:8.3px;color:#111;letter-spacing:-0.212px;">ExtraDesignWidth</div></div>
<div class="a" style="left:835.8px;top:653.12px;width:92.8px;height:10.59px;background:#fff;overflow:hidden"><div class="t" style="left:2.6px;top:0.4px;font-size:8.3px;color:#111;letter-spacing:-0.394px;">False</div></div>
<div class="a" style="left:928.8px;top:440.5px;width:11.2px;height:226px;background:#eceef0"></div>
<div class="a" style="left:929.3px;top:527px;width:10.5px;height:125px;border-radius:2px;border:1px solid #9da2aa;background:linear-gradient(90deg,#e9ebee,#cfd3d8 50%,#b9bec5)"></div>
<div class="a" style="left:932.2px;top:585px;width:5px;height:5px;background:repeating-linear-gradient(#6b7078 0 1px,transparent 1px 2px)"></div>
<div class="a" style="left:932.2px;top:447px;border:2.5px solid transparent;border-bottom:3px solid #555;border-top:0"></div>
<div class="a" style="left:932.2px;top:658.5px;border:2.5px solid transparent;border-top:3px solid #555;border-bottom:0"></div>
<div class="a" style="left:760px;top:666px;width:182px;height:45px;background:#cdd0d5;border-top:1px solid #e6e8ea"></div>
<div class="t" style="left:764px;top:671px;font-size:8.3px;color:#111;letter-spacing:0.143px;font-weight:bold;">(Name)</div>
<div class="t" style="left:764px;top:681.7px;font-size:8.3px;color:#111;letter-spacing:-0.089px;">Gets or sets the name of the object.</div>
<div class="a" style="left:23px;top:691px;width:734px;height:20px;background:#525252"></div>
<div class="a" style="left:2px;top:710.5px;width:940px;height:20.5px;background:linear-gradient(#4c4c4c 0%,#3d3d3d 10%,#3a3a3a 33%,#454545 37%,#3e3e3e 65%,#343434 100%)"></div>
<div class="a" style="left:757px;top:710.5px;width:185px;height:20.5px;background:linear-gradient(#878787 0%,#6e6e6e 25%,#4f4f4f 60%,#303030 100%)"></div>
<div class="a" style="left:27.5px;top:691px;width:39px;height:17px;border-radius:0 0 3px 3px;background:linear-gradient(#c6cad0,#dcdfe3 55%,#e8eaed);border:1px solid #9ea3ab;border-top:0"></div>
<svg class="a" style="left:31px;top:695px" width="8" height="10" viewBox="0 0 8 10"><rect x=".5" y=".5" width="7" height="9" fill="#f5f6f8" stroke="#8b8f70" stroke-width=".8"/><path d="M2 2.5 H5 M2 4.5 H4 M2 6.5 H5" stroke="#3a57c6" stroke-width=".9"/></svg>
<div class="t" style="left:43px;top:694.7px;font-size:8.3px;color:#222;letter-spacing:-0.379px;">Code</div>
<div class="a" style="left:68px;top:690.5px;width:42.5px;height:18px;border-radius:0 0 3px 3px;background:#f6f7f8;border:1px solid #aeb2b8;border-top:0"></div>
<svg class="a" style="left:72px;top:694.8px" width="8.5" height="10.5" viewBox="0 0 8.5 10.5"><rect x=".5" y=".5" width="7.5" height="9.5" fill="#eef1f8" stroke="#7f8fb5" stroke-width=".9"/><rect x="1.5" y="1.5" width="5.5" height="7.5" fill="#dfe5f2"/></svg>
<div class="t" style="left:84px;top:694.7px;font-size:8.3px;color:#222;letter-spacing:-0.402px;">Page1</div>
<div class="t" style="left:4px;top:715.5px;font-size:8.3px;color:#f0f0f0;letter-spacing:-0.402px;">Page1</div>
<div class="a" style="left:12px;top:726.5px;width:22px;height:12px;border-radius:11px 11px 0 0;background:radial-gradient(ellipse at 50% 100%,#5f7ea6,#9fb2c8 70%,#c9d3de)"></div>
<div class="a" style="left:763.3px;top:714px;width:15px;height:13px;background:linear-gradient(#e9ecf1,#c4cad4);border:1px solid #7d8492;border-radius:1px"></div>
<div class="a" style="left:778.6px;top:714px;width:15px;height:13px;background:linear-gradient(#e9ecf1,#c4cad4);border:1px solid #7d8492;border-radius:1px"></div>
<div class="a" style="left:794px;top:714px;width:15px;height:13px;background:linear-gradient(#e9ecf1,#c4cad4);border:1px solid #7d8492;border-radius:1px"></div>
<svg class="a" style="left:766px;top:716.5px" width="10" height="8" viewBox="0 0 10 8"><rect x=".5" y="1.5" width="9" height="5" fill="#fff" stroke="#3a57a6" stroke-width=".9"/><path d="M2 4 H8 M2 4 l2-1.5 M2 4 l2 1.5 M8 4 l-2-1.5 M8 4 l-2 1.5" stroke="#3a57a6" stroke-width=".8" fill="none"/></svg>
<svg class="a" style="left:782.5px;top:716px" width="8" height="9" viewBox="0 0 8 9"><rect x=".5" y=".5" width="7" height="8" fill="#fff" stroke="#3a57a6" stroke-width=".9"/><rect x="2.5" y="2" width="3" height="5" fill="#9fb2e0"/></svg>
<svg class="a" style="left:797px;top:716px" width="9" height="9" viewBox="0 0 9 9"><path d="M0 1 H9 M0 4.5 H9 M0 8 H9" stroke="#4a5a7a" stroke-width="1.2"/><rect x=".4" y=".4" width="8.2" height="8.2" fill="none" stroke="#6a7690" stroke-width=".7"/></svg>
<div class="t" style="left:816px;top:716px;font-size:8.3px;color:#cfcfcf;letter-spacing:-0.182px;">100%</div>
<div class="a" style="left:851px;top:720px;width:65px;height:1px;background:#d0d0d0"></div>
<svg class="a" style="left:840.8px;top:715px" width="11" height="11" viewBox="0 0 11 11"><circle cx="5.5" cy="5.5" r="4.7" fill="#c9ccd1" stroke="#f0f0f0" stroke-width="1"/><path d="M3 5.5 H8" stroke="#555" stroke-width="1.2"/></svg>
<svg class="a" style="left:915.3px;top:715px" width="11" height="11" viewBox="0 0 11 11"><circle cx="5.5" cy="5.5" r="4.7" fill="#c9ccd1" stroke="#f0f0f0" stroke-width="1"/><path d="M3 5.5 H8" stroke="#555" stroke-width="1.2"/><path d="M5.5 3 V8" stroke="#555" stroke-width="1.2"/></svg>
<svg class="a" style="left:881px;top:715.5px" width="5.5" height="10.5" viewBox="0 0 5.5 10.5"><path d="M.5 .5 H5 V7 L2.75 10 .5 7z" fill="#e4e6ea" stroke="#777" stroke-width=".8"/></svg>
<div class="a" style="left:0;top:0;width:942px;height:1px;background:#fff"></div>
<div class="a" style="left:0;top:0;width:2.3px;height:731px;background:linear-gradient(90deg,#fff 0,#fff 1px,#0c0c0c 1px)"></div>
<div class="a" style="left:939.8px;top:0;width:2.2px;height:731px;background:linear-gradient(90deg,#141414 0,#141414 1.2px,#fff 1.2px)"></div>
</body></html>
